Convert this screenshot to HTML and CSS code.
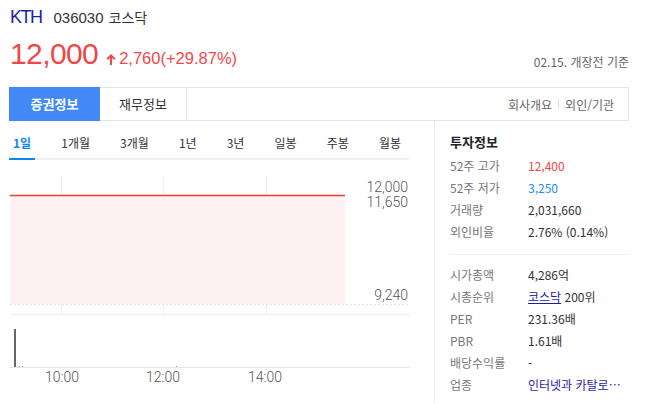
FILE: index.html
```html
<!DOCTYPE html>
<html lang="ko">
<head>
<meta charset="utf-8">
<title>KTH 036030 코스닥</title>
<link rel="stylesheet" href="styles.css">
</head>
<body>
<div class="page">
  <header class="head">
    <div class="title">
      <a class="name" href="#">KTH</a>
      <span class="code">036030</span>
      <span class="market">코스닥</span>
    </div>
    <div class="price-row">
      <div class="price">
        <strong class="now">12,000</strong>
        <span class="chg"><svg class="arrow" width="10" height="11" viewBox="0 0 10 11"><path d="M1.2 5.2 L5 1.4 L8.8 5.2" fill="none" stroke="#f04848" stroke-width="2"/><path d="M5 2 V11" stroke="#f04848" stroke-width="2"/></svg>2,760(+29.87%)</span>
      </div>
      <span class="asof">02.15. 개장전 기준</span>
    </div>
  </header>

  <nav class="tabs">
    <a class="tab on" href="#">증권정보</a>
    <a class="tab" href="#">재무정보</a>
    <div class="links"><a href="#">회사개요</a><span class="sep"></span><a href="#">외인/기관</a></div>
  </nav>

  <div class="body">
    <section class="chartcol">
      <ul class="periods">
        <li class="on">1일</li>
        <li>1개월</li>
        <li>3개월</li>
        <li>1년</li>
        <li>3년</li>
        <li>일봉</li>
        <li>주봉</li>
        <li>월봉</li>
      </ul>
      <svg class="chart" width="426" height="243" viewBox="9 161 426 243">
        <g stroke="#efefef" stroke-width="1">
          <line x1="61.5" y1="176" x2="61.5" y2="315"/>
          <line x1="163.5" y1="176" x2="163.5" y2="315"/>
          <line x1="266.5" y1="176" x2="266.5" y2="315"/>
        </g>
        <rect x="10" y="196" width="335" height="109" fill="#fdf1f3"/>
        <line x1="10" y1="196.5" x2="345" y2="196.5" stroke="#ee3d2e" stroke-width="1.5"/>
        <line x1="10" y1="305.5" x2="408" y2="305.5" stroke="#ebdfe3" stroke-width="1" stroke-dasharray="2 2"/>
        <line x1="10" y1="315.5" x2="410" y2="315.5" stroke="#f0f0f0" stroke-width="1.5"/>
        <g class="axis" text-anchor="end">
          <text x="408" y="192.5">12,000</text>
          <text x="408" y="207.5">11,650</text>
          <text x="408" y="301">9,240</text>
        </g>
        <line x1="10" y1="368.5" x2="410" y2="368.5" stroke="#e6e6e6" stroke-width="1"/>
        <rect x="14" y="330" width="2" height="38" fill="#666"/>
        <rect x="19" y="367" width="1" height="1" fill="#999"/>
        <rect x="22" y="367" width="1" height="1" fill="#999"/>
        <rect x="176" y="367" width="1" height="1" fill="#999"/>
        <g class="axis" text-anchor="middle">
          <text x="62" y="383">10:00</text>
          <text x="163" y="383">12:00</text>
          <text x="265" y="383">14:00</text>
        </g>
      </svg>
    </section>

    <aside class="info">
      <h3 class="info-title">투자정보</h3>
      <dl class="grp first">
        <div class="row"><dt>52주 고가</dt><dd class="up">12,400</dd></div>
        <div class="row"><dt>52주 저가</dt><dd class="down">3,250</dd></div>
        <div class="row"><dt>거래량</dt><dd>2,031,660</dd></div>
        <div class="row"><dt>외인비율</dt><dd>2.76% (0.14%)</dd></div>
      </dl>
      <dl class="grp second">
        <div class="row"><dt>시가총액</dt><dd>4,286억</dd></div>
        <div class="row"><dt>시총순위</dt><dd><a class="link" href="#">코스닥</a> 200위</dd></div>
        <div class="row"><dt>PER</dt><dd>231.36배</dd></div>
        <div class="row"><dt>PBR</dt><dd>1.61배</dd></div>
        <div class="row"><dt>배당수익률</dt><dd>-</dd></div>
        <div class="row"><dt>업종</dt><dd><a class="link plain" href="#">인터넷과 카탈로…</a></dd></div>
      </dl>
    </aside>
  </div>
</div>
</body>
</html>
```

FILE: styles.css
```css
* { box-sizing: border-box; }
html, body { margin: 0; padding: 0; background: #fff; }
body {
  font-family: "Noto Sans CJK KR", "Noto Sans", sans-serif;
  color: #333;
  width: 650px;
  height: 404px;
  overflow: hidden;
}
a { text-decoration: none; color: inherit; }

.page { padding: 0 21px 0 9px; }

.head { padding-top: 7px; }
.title {
  display: flex;
  align-items: baseline;
  height: 20px;
  line-height: 20px;
}
.name {
  font-family: "Liberation Sans", Arial, sans-serif;
  font-size: 18px;
  letter-spacing: -1.5px;
  color: #1d1da6;
  margin-left: 1px;
}
.code {
  font-family: "Liberation Sans", Arial, sans-serif;
  font-size: 15px;
  color: #333;
  margin-left: 12px;
}
.market {
  font-size: 14px;
  color: #333;
  margin-left: 5px;
}

.price-row {
  display: flex;
  justify-content: space-between;
  align-items: flex-end;
  margin-top: 10px;
  height: 34px;
}
.price { display: flex; align-items: baseline; }
.now {
  font-family: "Liberation Sans", Arial, sans-serif;
  font-weight: normal;
  font-size: 30px;
  line-height: 34px;
  letter-spacing: -0.6px;
  color: #f04848;
  margin-left: 1px;
}
.chg {
  font-family: "Liberation Sans", Arial, sans-serif;
  font-size: 16.5px;
  color: #f04848;
  margin-left: 8px;
}
.arrow { margin-right: 3px; vertical-align: -1px; }
.asof {
  font-size: 12px;
  line-height: 16px;
  color: #666;
  margin-bottom: 1px;
}

.tabs {
  display: flex;
  margin-top: 16px;
  height: 34px;
  border: 1px solid #e5e5e5;
}
.tab {
  width: 87px;
  line-height: 32px;
  text-align: center;
  font-size: 13px;
  color: #333;
  border-right: 1px solid #e5e5e5;
}
.tab.on {
  width: 91px;
  height: 34px;
  line-height: 34px;
  margin: -1px 0 -1px -1px;
  background: #4289f5;
  color: #fff;
  font-weight: bold;
  border-right: none;
}
.links {
  margin-left: auto;
  padding-right: 14px;
  display: flex;
  align-items: center;
  font-size: 12px;
  color: #666;
}
.sep {
  width: 1px;
  height: 10px;
  background: #ddd;
  margin: 0 6px;
}

.body { display: flex; height: 282px; }
.chartcol {
  width: 426px;
  border-right: 1px solid #eee;
}
.periods {
  list-style: none;
  margin: 0 25px 0 0;
  padding: 0 4px 0 0;
  display: flex;
  justify-content: space-between;
  border-bottom: 2px solid #efefef;
}
.periods li {
  padding: 14px 4px 7px;
  line-height: 16px;
  font-size: 12px;
  color: #333;
  border-bottom: 2px solid transparent;
  margin-bottom: -2px;
}
.periods li.on {
  color: #0f86f5;
  font-weight: bold;
  border-bottom-color: #0f86f5;
}
.chart { display: block; }
.axis {
  font-family: Roboto, "Liberation Sans", sans-serif;
  font-size: 14px;
  font-weight: 300;
  fill: #555;
}

.info {
  flex: 1;
  padding: 11px 0 0 15px;
}
.info-title {
  margin: 0 0 3px;
  font-size: 13px;
  line-height: 20px;
  font-weight: bold;
  color: #222;
}
.grp { margin: 0; }
.grp.first { padding-bottom: 11px; border-bottom: 1px solid #eee; }
.grp.second { padding-top: 9px; }
.row {
  display: flex;
  font-size: 12px;
  line-height: 22px;
}
.row dt { width: 78px; color: #777; flex: none; }
.row dd { margin: 0; color: #333; white-space: nowrap; }
.row dd.up { color: #f04848; }
.row dd.down { color: #1a8cff; }
.link { color: #1d1da6; text-decoration: underline; }
.link.plain { text-decoration: none; }
```
